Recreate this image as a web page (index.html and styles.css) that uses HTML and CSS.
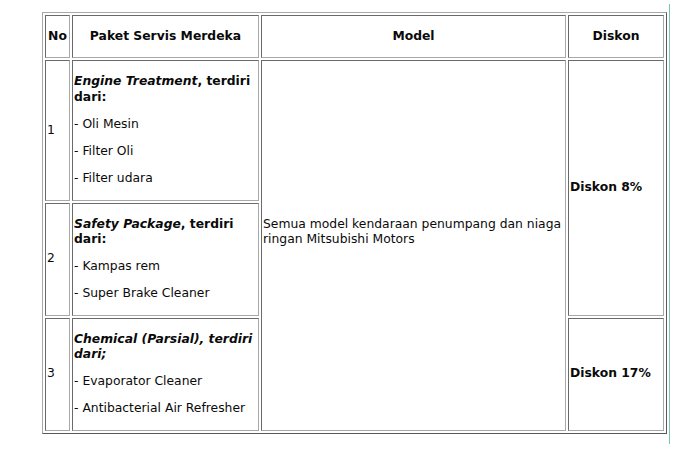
FILE: index.html
```html
<!DOCTYPE html>
<html>
<head>
<meta charset="utf-8">
<link rel="stylesheet" href="styles.css">
</head>
<body>
<div class="page">
  <table class="promo">
    <thead>
      <tr>
        <th class="col-no"><p>No</p></th>
        <th class="col-pkg"><p>Paket Servis Merdeka</p></th>
        <th class="col-model"><p>Model</p></th>
        <th class="col-disc"><p>Diskon</p></th>
      </tr>
    </thead>
    <tbody>
      <tr>
        <td>1</td>
        <td>
          <p><strong><em>Engine Treatment</em>, terdiri dari:</strong></p>
          <p>- Oli Mesin</p>
          <p>- Filter Oli</p>
          <p>- Filter udara</p>
        </td>
        <td rowspan="3" class="model"><p>Semua model kendaraan penumpang dan niaga ringan Mitsubishi Motors</p></td>
        <td rowspan="2"><strong>Diskon 8%</strong></td>
      </tr>
      <tr>
        <td>2</td>
        <td>
          <p><strong><em>Safety Package</em>, terdiri dari:</strong></p>
          <p>- Kampas rem</p>
          <p>- Super Brake Cleaner</p>
        </td>
      </tr>
      <tr>
        <td>3</td>
        <td>
          <p><strong><em>Chemical (Parsial), terdiri dari;</em></strong></p>
          <p>- Evaporator Cleaner</p>
          <p>- Antibacterial Air Refresher</p>
        </td>
        <td><strong>Diskon 17%</strong></td>
      </tr>
    </tbody>
  </table>
</div>
</body>
</html>
```
FILE: styles.css
```css
html, body {
  margin: 0;
  padding: 0;
  background: #ffffff;
}

body {
  font-family: "DejaVu Sans", Verdana, sans-serif;
  font-size: 12.35px;
  line-height: 15.25px;
  color: #0a0a0a;
}

.page {
  display: inline-block;
  margin-top: 4px;
  padding: 8px 2px 10px 42px;
  border-right: 1px solid #7cc3b5;
}

.promo {
  table-layout: fixed;
  width: 625px;
  border-collapse: separate;
  border-spacing: 2px;
  border-style: solid;
  border-width: 1px;
  border-color: #a8a8a8 #5a5a5a #5a5a5a #a8a8a8;
}

.promo th,
.promo td {
  box-sizing: border-box;
  padding: 1px;
  border-style: solid;
  border-width: 1px;
  border-color: #6a6a6a #a8a8a8 #a8a8a8 #6a6a6a;
  vertical-align: middle;
  text-align: left;
}

.promo th {
  text-align: center;
  font-weight: bold;
}

.promo p {
  margin: 12px 0;
}

.col-no { width: 25px; }
.col-pkg { width: 187px; }
.col-model { width: 305px; }
.col-disc { width: 96px; }

.promo td.model {
  padding-bottom: 27px;
}
```
